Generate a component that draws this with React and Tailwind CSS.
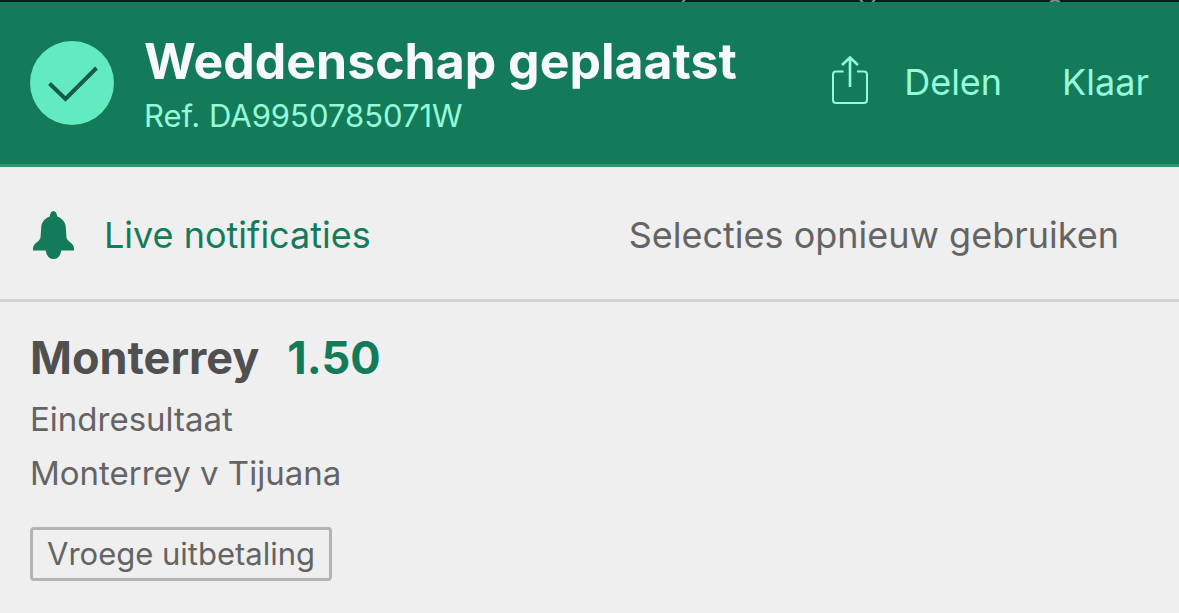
function CheckBadge() {
  return (
    <svg className="size-21 shrink-0" viewBox="0 0 84 84" fill="none" aria-hidden="true">
      <circle cx="42" cy="42" r="42" fill="#62eac0" />
      <path d="M19.5 42.5 L35.5 58 L66.5 27" stroke="#175a48" strokeWidth="4" />
    </svg>
  );
}

function ShareIcon() {
  return (
    <svg className="h-13 w-9 shrink-0" viewBox="0 0 36 52" fill="none" stroke="currentColor" strokeWidth="2" aria-hidden="true">
      <path d="M11.5 15.5 H4 Q1 15.5 1 18.5 V44 Q1 47 4 47 H32 Q35 47 35 44 V18.5 Q35 15.5 32 15.5 H25" />
      <path d="M18 31 V1.5 M10 9 L18 1.5 L26 9" strokeWidth="2.6" />
    </svg>
  );
}

function BellIcon() {
  return (
    <svg className="h-12 w-[41px] shrink-0" viewBox="0 0 41 48" fill="currentColor" aria-hidden="true">
      <path d="M20.5 0 C18.5 0 17 2.2 16.8 5.6 C11.5 7.5 8.5 11.5 8.2 16.5 L7.6 25.5 C7.4 28 6.4 29.4 4.2 31 C1.5 33 0 35 0 37.5 V39.5 H12.7 C13.5 44.5 16 48 20.5 48 C25 48 27.5 44.5 28.3 39.5 H41 V37.5 C41 35 39.5 33 36.8 31 C34.6 29.4 33.6 28 33.4 25.5 L32.8 16.5 C32.5 11.5 29.5 7.5 24.2 5.6 C24 2.2 22.5 0 20.5 0 Z" />
    </svg>
  );
}

export default function App() {
  return (
    <div className="min-h-screen bg-[#efefef] font-['Inter',sans-serif] text-[#646464]">
      <div className="flex h-0.5 justify-end bg-[#0c1c18]">
        <svg className="h-0.5 w-[500px]" viewBox="0 0 500 2" fill="none" stroke="#8a8a8a" strokeWidth="2" aria-hidden="true">
          <path d="M3 2 L6 0 M181 0 L184 2 M193 2 L196 0 M371 2 Q376 -1 381 2" />
        </svg>
      </div>

      <header className="flex h-[165px] items-center justify-between border-b-[3px] border-[#2b9670] bg-[#147b5a] px-[30px]">
        <div className="flex items-center gap-[30px]">
          <CheckBadge />
          <div className="pt-1.5 whitespace-nowrap">
            <h1 className="text-[50px] leading-15 font-bold text-[#f7fafb]">Weddenschap geplaatst</h1>
            <p className="text-[31px] leading-[50px] text-[#95fbda]">Ref. DA9950785071W</p>
          </div>
        </div>
        <div className="flex items-center gap-15 pb-0.5 text-4xl text-[#95fbda]">
          <button type="button" className="flex items-center gap-9">
            <ShareIcon />
            Delen
          </button>
          <button type="button">Klaar</button>
        </div>
      </header>

      <div className="flex h-[135px] items-center justify-between border-b-[3px] border-[#d2d2d2] pt-1 pr-15 pl-[33px] text-4xl">
        <button type="button" className="flex items-center gap-[30px] text-[#147b5a]">
          <BellIcon />
          Live notificaties
        </button>
        <button type="button">Selecties opnieuw gebruiken</button>
      </div>

      <main className="px-[30px] py-[26px]">
        <div className="flex gap-7 text-[45px] leading-15 font-bold">
          <h2 className="text-[#505050]">Monterrey</h2>
          <span className="text-[#147b5a]">1.50</span>
        </div>
        <p className="mt-1 text-[33px] leading-[54px]">Eindresultaat</p>
        <p className="text-[33px] leading-[54px]">Monterrey v Tijuana</p>
        <div className="mt-[27px] inline-block rounded-sm border-[3px] border-[#b4b4b4] px-3.5 text-[31px] leading-12">
          Vroege uitbetaling
        </div>
      </main>
    </div>
  );
}
